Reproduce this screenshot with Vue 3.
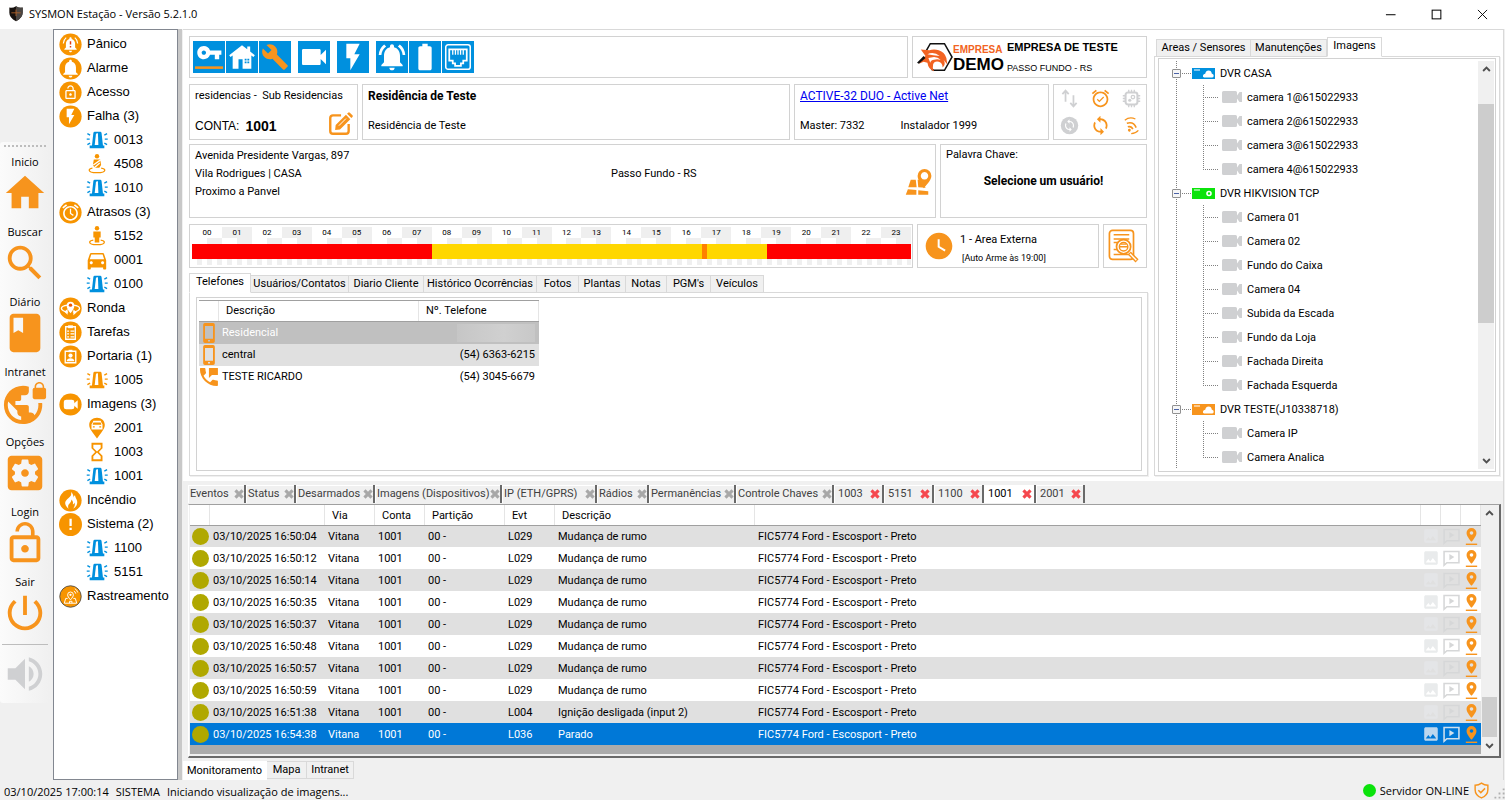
<script setup>
import { h, ref } from 'vue'

const BELL = 'M12 22c1.1 0 2-.9 2-2h-4c0 1.1.89 2 2 2zm6-6v-5c0-3.07-1.64-5.64-4.5-6.32V4c0-.83-.67-1.5-1.5-1.5s-1.5.67-1.5 1.5v.68C7.63 5.36 6 7.92 6 11v5l-2 2v1h16v-1l-2-2z'
const BOLT = 'M7 2v11h3v9l7-12h-4l4-8z'
const CAM = 'M17 10.5V7c0-.55-.45-1-1-1H4c-.55 0-1 .45-1 1v10c0 .55.45 1 1 1h12c.55 0 1-.45 1-1v-3.5l4 4v-11l-4 4z'
const LOCK = 'M12 17c1.1 0 2-.9 2-2s-.9-2-2-2-2 .9-2 2 .9 2 2 2zm6-9h-1V6c0-2.76-2.24-5-5-5S7 3.24 7 6h1.9c0-1.71 1.39-3.1 3.1-3.1 1.71 0 3.1 1.39 3.1 3.1v2H6c-1.1 0-2 .9-2 2v10c0 1.1.9 2 2 2h12c1.1 0 2-.9 2-2V10c0-1.1-.9-2-2-2zm0 12H6V10h12v10z'
const CAR = 'M18.92 6.01C18.72 5.42 18.16 5 17.5 5h-11c-.66 0-1.21.42-1.42 1.01L3 12v8c0 .55.45 1 1 1h1c.55 0 1-.45 1-1v-1h12v1c0 .55.45 1 1 1h1c.55 0 1-.45 1-1v-8l-2.08-5.99zM6.5 16c-.83 0-1.5-.67-1.5-1.5S5.67 13 6.5 13s1.5.67 1.5 1.5S7.33 16 6.5 16zm11 0c-.83 0-1.5-.67-1.5-1.5s.67-1.5 1.5-1.5 1.5.67 1.5 1.5-.67 1.5-1.5 1.5zM5 11l1.5-4.5h11L19 11H5z'
const SYNC = 'M12 4V1L8 5l4 4V6c3.31 0 6 2.69 6 6 0 1.01-.25 1.97-.7 2.8l1.46 1.46C19.54 15.03 20 13.57 20 12c0-4.42-3.58-8-8-8zm0 14c-3.31 0-6-2.69-6-6 0-1.01.25-1.97.7-2.8L5.24 7.74C4.46 8.97 4 10.43 4 12c0 4.42 3.58 8 8 8v3l4-4-4-4v3z'
const ALARM = 'M22 5.72l-4.6-3.86-1.29 1.53 4.6 3.86L22 5.72zM7.88 3.39L6.6 1.86 2 5.71l1.29 1.53 4.59-3.85zM12 4c-4.97 0-9 4.03-9 9s4.02 9 9 9c4.97 0 9-4.03 9-9s-4.03-9-9-9zm0 16c-3.87 0-7-3.13-7-7s3.13-7 7-7 7 3.13 7 7-3.13 7-7 7z'
const p = (d, extra = '') => `<path d="${d}" ${extra}/>`
const s = (d, w = 1.5, c = 'currentColor') => `<path d="${d}" fill="none" stroke="${c}" stroke-width="${w}"/>`
const disc = (inner) => `<circle cx="12" cy="12" r="11.6" fill="#f79400"/>${inner}`
const mini = (d, k = 0.7) => `<g fill="#fff" transform="translate(${12 - 12 * k} ${12 - 12 * k}) scale(${k})">${p(d)}</g>`

const icons = {
  home: p('M10 20v-6h4v6h5v-8h3L12 3 2 12h3v8z'),
  search: p('M15.5 14h-.79l-.28-.27C15.41 12.59 16 11.11 16 9.5 16 5.91 13.09 3 9.5 3S3 5.91 3 9.5 5.91 16 9.5 16c1.61 0 3.09-.59 4.23-1.57l.27.28v.79l5 4.99L20.49 19l-4.99-5zm-6 0C7.01 14 5 11.99 5 9.5S7.01 5 9.5 5 14 7.01 14 9.5 11.99 14 9.5 14z'),
  book: p('M18 2H6c-1.1 0-2 .9-2 2v16c0 1.1.9 2 2 2h12c1.1 0 2-.9 2-2V4c0-1.1-.9-2-2-2zM6 4h5v8l-2.5-1.5L6 12V4z'),
  globe: p('M22 4v-.5C22 2.12 20.88 1 19.5 1S17 2.12 17 3.5V4c-.55 0-1 .45-1 1v4c0 .55.45 1 1 1h5c.55 0 1-.45 1-1V5c0-.55-.45-1-1-1zm-.8 0h-3.4v-.5c0-.94.76-1.7 1.7-1.7s1.7.76 1.7 1.7V4zm-2.28 8c.04.33.08.66.08 1 0 2.08-.8 3.97-2.1 5.39-.26-.81-1-1.39-1.9-1.39h-1v-3c0-.55-.45-1-1-1H7v-2h2c.55 0 1-.45 1-1V8h2c1.1 0 2-.9 2-2V3.46c-.95-.3-1.95-.46-3-.46C5.48 3 1 7.48 1 13s4.48 10 10 10 10-4.48 10-10c0-.34-.02-.67-.05-1h-2.03zM10 20.93c-3.95-.49-7-3.85-7-7.93 0-.62.08-1.21.21-1.79L8 16v1c0 1.1.9 2 2 2v1.93z'),
  settings: p('M12 10c-1.1 0-2 .9-2 2s.9 2 2 2 2-.9 2-2-.9-2-2-2zm7-7H5c-1.11 0-2 .9-2 2v14c0 1.1.89 2 2 2h14c1.11 0 2-.9 2-2V5c0-1.1-.89-2-2-2zm-1.75 9c0 .23-.02.46-.05.68l1.48 1.16c.13.11.17.3.08.45l-1.4 2.42c-.09.15-.27.21-.43.15l-1.74-.7c-.36.28-.76.51-1.18.69l-.26 1.85c-.03.17-.18.3-.35.3h-2.8c-.17 0-.32-.13-.35-.29l-.26-1.85c-.43-.18-.82-.41-1.18-.69l-1.74.7c-.16.06-.34 0-.43-.15l-1.4-2.42c-.09-.15-.05-.34.08-.45l1.48-1.16c-.03-.23-.05-.46-.05-.69 0-.23.02-.46.05-.68l-1.48-1.16c-.13-.11-.17-.3-.08-.45l1.4-2.42c.09-.15.27-.21.43-.15l1.74.7c.36-.28.76-.51 1.18-.69l.26-1.85c.03-.17.18-.3.35-.3h2.8c.17 0 .32.13.35.29l.26 1.85c.43.18.82.41 1.18.69l1.74-.7c.16-.06.34 0 .43.15l1.4 2.42c.09.15.05.34-.08.45l-1.48 1.16c.03.23.05.46.05.69z'),
  lock: p(LOCK),
  power: p('M13 3h-2v10h2V3zm4.83 2.17l-1.42 1.42C17.99 7.86 19 9.81 19 12c0 3.87-3.13 7-7 7s-7-3.13-7-7c0-2.19 1.01-4.14 2.58-5.42L6.17 5.17C4.23 6.82 3 9.26 3 12c0 4.97 4.03 9 9 9s9-4.03 9-9c0-2.74-1.23-5.18-3.17-6.83z'),
  volume: p('M3 9v6h4l5 5V4L7 9H3zm13.5 3c0-1.77-1.02-3.29-2.5-4.03v8.05c1.48-.73 2.5-2.25 2.5-4.02zM14 3.23v2.06c2.89.86 5 3.54 5 6.71s-2.11 5.85-5 6.71v2.06c4.01-.91 7-4.49 7-8.77s-2.99-7.86-7-8.77z'),

  dPanico: disc(mini(BELL, 0.8) + s('M4.5 11a8.5 8.5 0 0 1 3-6.200M19.500 11a8.500 8.500 0 0 0-3-6.200', 1.2, '#fff') + s('M12 8.500v3.500M12 13.500v1.500', 1.5, '#e33a10')),
  dAlarme: disc(mini(BELL, 0.95)),
  dAcesso: disc(mini(LOCK, 0.68)),
  dFalha: disc(mini(BOLT, 0.8)),
  dAtrasos: disc(mini(ALARM, 0.86) + s('M12 8v5l3 2', 1.3, '#fff')),
  dRonda: disc(`<g fill="none" stroke="#fff" stroke-width="1.400"><path d="M9 8.500C5 9 2.500 10.500 2.500 12s3 3.500 7 3.800M15 8.500c4 .5 6.500 2 6.500 3.500s-3 3.500-7 3.800"/></g><path d="M12 17c-2.500-3.500-4-5.500-4-8a4 4 0 0 1 8 0c0 2.500-1.500 4.500-4 8zM9 12.500v6l-3.500-3zM15 13v6l3.500-3z" fill="#fff"/><circle cx="12" cy="8.500" r="1.800" fill="#f15a00"/>`),
  dTarefas: disc('<path d="M7 6h10v13H7z" fill="none" stroke="#fff" stroke-width="1.400"/><path d="M9.500 4.500h5v3h-5z" fill="#fff"/>' + s('M8.500 10.500h2M12 10.500h4M8.500 13.500h2M12 13.500h4M8.500 16.500h2M12 16.500h4', 1.2, '#fff')),
  dPortaria: disc('<path d="M6.500 6.500h11v12h-11z" fill="none" stroke="#fff" stroke-width="1.400"/><path d="M10 5h4v2.500h-4z" fill="#fff"/><circle cx="12" cy="11" r="2.200" fill="#fff"/><path d="M8 17c0-2.500 2-3.300 4-3.300s4 .8 4 3.300z" fill="#fff"/>'),
  dImagens: disc('<rect x="5" y="7" width="11" height="10" rx="2.500" fill="#fff"/><path d="M15 11.500l4.500-4v9l-4.500-4z" fill="#fff"/>'),
  dIncendio: disc('<path d="M12.500 3c1 3-.5 4.500-2.500 6.500S6 13 6.500 15.500c.4 2.300 2 4 3.500 5-1-2.500-.5-4 1-5.500 1.300-1.300 2-2.500 1.800-4 2 1.500 2.200 3.500 1.500 5 1-.3 1.600-1 1.800-2 1 2 .3 4.500-1.500 6.500 3-1.300 5-4.500 4.300-8-.5-2.500-2-3.500-2.200-6-1 .7-1.500 1.700-1.500 3C15.500 7.500 14.500 4.500 12.500 3z" fill="#fff"/>'),
  dSistema: '<circle cx="12" cy="12" r="12" fill="#f79400"/><path d="M10.900 6h2.400v7.500h-2.400zM10.900 15.300h2.400v2.400h-2.400z" fill="#fff"/>',
  dRastreamento: '<circle cx="12" cy="12" r="11.200" fill="#f79400" stroke="#4a4a4a" stroke-width=".9"/>' + s('M12 15.500c-2-2.500-3-3.700-3-5.200a3 3 0 0 1 6 0c0 1.500-1 2.700-3 5.200zM9 14H7l-1.500 5h13L17 14h-2M11 19v-2h2.500v2', 1, '#fff') + '<circle cx="12" cy="10.300" r="1.200" fill="#fff"/>' + s('M15.500 6.500a3 3 0 0 1 2 2.500M16.500 3.800a6 6 0 0 1 3 4', 1, '#fff'),
  siren: '<path d="M6.500 18L8 4.500Q8.200 3 9.500 3h6q1.300 0 1.500 1.500L18.500 18h1.500v3H4v-3z"/><path d="M9.500 17.500L10.800 6q.2-1.500 1.500-1.500h.7l.5 13z" fill="#fff"/>' + s('M1.500 5l3 1.600M.8 11h3.200M1.500 17l3-1.600M23 5l-3 1.600M23.700 11h-3.200M23 17l-3-1.600', 1.5),
  person: '<circle cx="12" cy="3.500" r="2.400"/><path d="M8 7h8v6.500h-1.500V19h-5v-5.500H8z"/>' + s('M8 16.500c-2.500.4-4 1.200-4 2.300 0 1.500 3.500 2.700 8 2.700s8-1.200 8-2.700c0-1.100-1.500-1.900-4-2.300', 1.4),
  personOff: '<circle cx="12" cy="3.500" r="2.400"/><path d="M8.500 7h7l1 6-2 3h-5l-2-3z"/>' + s('M8 13l8-5.500M9 16l6-5', 1.4, '#fff') + s('M7 16.500c-2.200.4-3.500 1.200-3.500 2.300 0 1.500 3.500 2.700 8.500 2.700s8.500-1.200 8.500-2.700c0-1.100-1.500-1.900-4-2.300', 1.4),
  car: p(CAR, 'transform="translate(-1.500 -1.200) scale(1.120)"'),
  carPin: '<path d="M12 23.500l-5-7C4.500 13.500 3.500 11 3.500 8.500 3.500 4 7 .7 12 .7s8.500 3.300 8.500 7.800c0 2.500-1 5-3.500 8z"/><path d="M7 6.500L8 4h8l1 2.500 1 1.500v5.500H6V8z" fill="#fff"/><path d="M8 6h8l.8 2.500H7.200zM7.500 10h2v1.500h-2zM14.500 10h2v1.500h-2z"/>',
  hourglass: p('M6 2v6h.01L6 8.01 10 12l-4 4 .01.01H6V22h12v-5.99h-.01L18 16l-4-4 4-3.990-.01-.01H18V2H6zm10 14.500V20H8v-3.500l4-4 4 4zm-4-5l-4-4V4h8v3.500l-4 4z'),

  key: p('M12.650 10C11.830 7.670 9.610 6 7 6c-3.310 0-6 2.690-6 6s2.690 6 6 6c2.610 0 4.830-1.670 5.650-4H17v4h4v-4h2v-4H12.650zM7 14c-1.100 0-2-.9-2-2s.9-2 2-2 2 .9 2 2-.9 2-2 2z', 'transform="translate(1 -3) scale(.94)"') + '<path d="M0 20h24v2.200H0z" fill="#f7941d"/>',
  house: p('M12 2L1 10.500l1.200 1.500L4 10.800V22h5v-8h3.500v8H20V10.800l1.800 1.200 1.200-1.500-4-3.200V3h-2.500v2.300zM14.300 13.500h1.600v1.500h-1.600zM16.600 13.500h1.600v1.500h-1.600zM14.300 15.800h1.600v1.500h-1.600zM16.600 15.800h1.600v1.500h-1.600z', 'fill-rule="evenodd"'),
  wrench: p('M22.700 19l-9.100-9.100c.9-2.300.4-5-1.500-6.900-2-2-5-2.400-7.400-1.300L9 6 6 9 1.600 4.700C.4 7.100.9 10.100 2.900 12.100c1.900 1.900 4.600 2.400 6.900 1.500l9.100 9.100c.4.4 1 .4 1.400 0l2.300-2.300c.5-.4.5-1.100.1-1.400z'),
  cam: p(CAM),
  bolt: p(BOLT),
  ring: p(BELL) + p('M7.580 4.080L6.150 2.650C3.750 4.480 2.170 7.300 2.030 10.500h2c.15-2.650 1.510-4.970 3.550-6.420zm12.390 6.420h2c-.15-3.200-1.730-6.020-4.120-7.850l-1.420 1.430c2.020 1.450 3.390 3.770 3.540 6.420z'),
  battery: p('M15.670 4H14V2h-4v2H8.330C7.600 4 7 4.600 7 5.330v15.330C7 21.400 7.600 22 8.330 22h7.330c.74 0 1.340-.6 1.340-1.330V5.330C17 4.600 16.400 4 15.670 4z'),
  ethernet: '<rect x="1.500" y="1.500" width="21" height="21" rx="2" fill="none" stroke="currentColor" stroke-width="1.300"/>' + s('M4.500 5.500h15v9.500h-3v2.500h-2v2h-5v-2h-2V15h-3z', 1.500) + s('M7.500 6v4M9.800 6v4M12 6v4M14.200 6v4M16.500 6v4', 1.100),
  edit: s('M13 4H5.500Q3 4 3 6.500v12Q3 21 5.500 21h12q2.500 0 2.500-2.500V12', 2.2) + p('M8 13l9.500-9.500 4 4L12 17l-4.500.5zM18.500 2.500l1-1q.8-.8 1.600 0l2.400 2.400q.8.800 0 1.600l-1 1z') + s('M11 13.500l6.500-6.500', 0.9, '#fff'),
  arrows: s('M7 16V2M3 6.500L7 2l4 4.500M17 8v14M13 17.500l4 4.500 4-4.500', 2.2),
  alarmOn: p(ALARM, 'transform="translate(-1.200 -1.200) scale(1.100)"') + p('M10.540 14.530l-2.120-2.120-1.060 1.060 3.180 3.180 6-6-1.060-1.060z'),
  chip: '<rect x="4.500" y="4.500" width="15" height="15" rx="3" fill="none" stroke="currentColor" stroke-width="2.600"/>' + s('M8.500 1v3M12 1v3M15.500 1v3M8.500 20v3M12 20v3M15.500 20v3M1 8.500h3M1 12h3M1 15.500h3M20 8.500h3M20 12h3M20 15.500h3', 1.700) + '<circle cx="13.800" cy="10.200" r="2.200" fill="none" stroke="currentColor" stroke-width="1.600"/><circle cx="9.800" cy="14.200" r="2"/>',
  syncDisc: '<circle cx="12" cy="12" r="11"/>' + mini(SYNC, 0.72),
  sync: p(SYNC, 'transform="translate(-1.500 -1.500) scale(1.120)"'),
  wifi: '<g transform="rotate(25 12 12)">' + s('M5.500 12q6.500-6 13 0M8.500 15.500q3.500-3 7 0', 2) + '<circle cx="12" cy="18.500" r="1.800"/>' + s('M1.500 9.500Q5 2.500 13 2.500M22.500 14Q21 19 16 21.500', 1.6) + '</g>',
  map: '<path d="M7 11h4l.7 6H5zM12.500 11h2l3 4.500 1.500 1.800-6-.3zM4.700 18.500l6.800.6V23H3zM13 19.300l8 .8V23h-8z"/><path fill-rule="evenodd" d="M17.500 17.800c-3-4.500-5-6.800-5-10a5.500 5.500 0 0 1 11 0c0 3.200-2.500 5.500-6 10zM18 4.800a3 3 0 1 0 .01 0z"/>',
  clock: p('M12 2C6.500 2 2 6.500 2 12s4.500 10 10 10 10-4.500 10-10S17.500 2 12 2zm4.200 14.200L11 13V7h1.500v5.200l4.500 2.700-.8 1.300z'),
  report: '<rect x="1" y="1" width="17" height="20.500" rx="2.200" fill="none" stroke="currentColor" stroke-width="1.200"/>' + s('M4 4h11M4 7h11M4 9.500h4M4 14.500h3M4 18h13', 1) + '<circle cx="11" cy="12.500" r="5" fill="#fff" stroke="currentColor" stroke-width="1.200"/><circle cx="11" cy="12.500" r="3" fill="none" stroke="currentColor"/>' + s('M8 12.500h6M9 10.700h4', 1) + s('M15 17l5.500 5.500', 3) + s('M15.500 17.500l4.500 4.500', 1, '#fff'),
  phone: '<path fill-rule="evenodd" d="M7 0h10q2 0 2 2v20q0 2-2 2H7q-2 0-2-2V2q0-2 2-2zM7.200 3.500v15.500h9.600V3.500zM10.800 20.500v1.800h2.400v-1.800z"/>',
  phoneMsg: p('M20 15.500c-1.250 0-2.450-.2-3.570-.57-.35-.11-.74-.03-1.020.24l-2.200 2.200c-2.830-1.440-5.150-3.750-6.590-6.580l2.200-2.210c.28-.27.36-.66.25-1.010C8.700 6.450 8.500 5.250 8.500 4c0-.55-.45-1-1-1H4c-.55 0-1 .45-1 1 0 9.390 7.610 17 17 17 .55 0 1-.45 1-1v-3.500c0-.55-.45-1-1-1zM12 3v10l3-3h6V3h-9z', 'transform="translate(-2.500 -2.500) scale(1.200)"'),
  close: s('M3.500 3.500l17 17M20.500 3.500l-17 17', 7.500),
  image: p('M21 19V5c0-1.100-.9-2-2-2H5c-1.100 0-2 .9-2 2v14c0 1.100.9 2 2 2h14c1.100 0 2-.9 2-2zM8.500 13.500l2.500 3.010L14.500 12l4.500 6H5l3.500-4.500z', 'transform="translate(-3.500 -3.500) scale(1.290)"'),
  play: s('M1.500 2h21v16H5.500l-4 3.500z', 2.2) + p('M9 5.500l7 4.500-7 4.500z'),
  pin: '<path fill-rule="evenodd" d="M12 0a7 7 0 0 1 7 7c0 5-7 12.500-7 12.500S5 12 5 7a7 7 0 0 1 7-7zM12 4.500a2.500 2.500 0 1 0 .01 0z"/><path d="M4 22h16v2H4z"/>',
  shield: s('M12 1.500q4 3 9 3V11q0 8-9 11.500Q3 19 3 11V4.500q5 0 9-3z', 2) + s('M7.500 11.500l3.500 3.500 6-6', 2),
  shieldLogo: '<path d="M2 3q5 1 10-2 5 3 10 2v8q0 8-10 12.500Q2 19 2 11z" fill="#17120f"/><path d="M12 1q5 3 10 2v8q0 8-10 12.500z" fill="#4a4643"/><path d="M5 11h14M12 6v10" stroke="#b0622a" stroke-width="1.300"/>',
  min: s('M2 12.500h21', 2.2),
  max: '<rect x="2.500" y="2.500" width="19" height="19" fill="none" stroke="currentColor" stroke-width="2.200"/>',
  exit: s('M2 2l20 20M22 2L2 22', 2),
  up: s('M3 16l9-9 9 9', 5),
  down: s('M3 8l9 9 9-9', 5),
  grip: '<path d="M19 1h4v4h-4zM19 10h4v4h-4zM19 19h4v4h-4zM10 10h4v4h-4zM10 19h4v4h-4zM1 19h4v4H1z"/>'
}
const Icon = (props) => h('svg', { class: 'icon', viewBox: '0 0 24 24', fill: 'currentColor', 'aria-hidden': 'true', innerHTML: icons[props.name] })
Icon.props = ['name']

const tools = [['Inicio', 'home'], ['Buscar', 'search'], ['Diário', 'book'], ['Intranet', 'globe'], ['Opções', 'settings'], ['Login', 'lock'], ['Sair', 'power']]
const B = 'blue', O = 'orange'
const queue = [
  ['Pânico', 'dPanico'], ['Alarme', 'dAlarme'], ['Acesso', 'dAcesso'],
  ['Falha (3)', 'dFalha', [['0013', 'siren', B], ['4508', 'personOff', O], ['1010', 'siren', B]]],
  ['Atrasos (3)', 'dAtrasos', [['5152', 'person', O], ['0001', 'car', O], ['0100', 'siren', B]]],
  ['Ronda', 'dRonda'], ['Tarefas', 'dTarefas'],
  ['Portaria (1)', 'dPortaria', [['1005', 'siren', O]]],
  ['Imagens (3)', 'dImagens', [['2001', 'carPin', O], ['1003', 'hourglass', O], ['1001', 'siren', B]]],
  ['Incêndio', 'dIncendio'],
  ['Sistema (2)', 'dSistema', [['1100', 'siren', B], ['5151', 'siren', B]]],
  ['Rastreamento', 'dRastreamento']
]
const actionGroups = [['key', 'house', 'wrench'], ['cam'], ['bolt'], ['ring', 'battery', 'ethernet']]
const states = [['arrows', 'off'], ['alarmOn', 'on'], ['chip', 'off'], ['syncDisc', 'off'], ['sync', 'on'], ['wifi', 'on']]
const hours = Array.from({ length: 24 }, (_, i) => String(i).padStart(2, '0'))
const DAY = 24 * 60
const segments = [['red', 481], ['gold', 540], ['mark', 10], ['gold', 121], ['red', 288]].map(([tone, min]) => ({ tone, width: (min / DAY) * 100 + '%' }))
const clientTabs = ['Telefones', 'Usuários/Contatos', 'Diario Cliente', 'Histórico Ocorrências', 'Fotos', 'Plantas', 'Notas', "PGM's", 'Veículos']
const clientTab = ref('Telefones')
const sideTabs = ['Areas / Sensores', 'Manutenções', 'Imagens']
const sideTab = ref('Imagens')
const dvrs = [
  { name: 'DVR CASA', tone: 'blue', cloud: true, cams: ['camera 1@615022933', 'camera 2@615022933', 'camera 3@615022933', 'camera 4@615022933'] },
  { name: 'DVR HIKVISION TCP', tone: 'green', cloud: false, cams: ['Camera 01', 'Camera 02', 'Fundo do Caixa', 'Camera 04', 'Subida da Escada', 'Fundo da Loja', 'Fachada Direita', 'Fachada Esquerda'] },
  { name: 'DVR TESTE(J10338718)', tone: 'amber', cloud: true, cams: ['Camera IP', 'Camera Analica'] }
]
const eventTabs = [...['Eventos', 'Status', 'Desarmados', 'Imagens (Dispositivos)', 'IP (ETH/GPRS)', 'Rádios', 'Permanências', 'Controle Chaves'].map((t) => [t, false]), ...['1003', '5151', '1100', '1001', '2001'].map((t) => [t, true])]
const eventTab = ref('1001')
const events = [
  ...['16:50:04', '16:50:12', '16:50:14', '16:50:35', '16:50:37', '16:50:48', '16:50:57', '16:50:59'].map((t) => [t, 'L029', 'Mudança de rumo']),
  ['16:51:38', 'L004', 'Ignição desligada (input 2)'],
  ['16:54:38', 'L036', 'Parado']
]
const bottomTabs = ['Monitoramento', 'Mapa', 'Intranet']
const bottomTab = ref('Monitoramento')
</script>

<template>
  <div class="app">
    <header class="titlebar">
      <Icon name="shieldLogo" class="logo" />
      <h1>SYSMON Estação - Versão 5.2.1.0</h1>
      <div class="winctl">
        <button aria-label="Minimizar"><Icon name="min" /></button>
        <button aria-label="Maximizar"><Icon name="max" /></button>
        <button aria-label="Fechar"><Icon name="exit" /></button>
      </div>
    </header>

    <div class="body">
      <nav class="toolbar">
        <div class="toolstrip">
          <div class="handle"></div>
          <button v-for="t in tools" :key="t[0]" class="tool"><span>{{ t[0] }}</span><Icon :name="t[1]" /></button>
          <button class="sound" aria-label="Som"><Icon name="volume" /></button>
        </div>
      </nav>

      <aside class="queue">
        <ul>
          <li v-for="g in queue" :key="g[0]">
            <div class="node"><Icon :name="g[1]" /><span>{{ g[0] }}</span></div>
            <ul v-if="g[2]">
              <li v-for="c in g[2]" :key="c[0]" class="node child"><Icon :name="c[1]" :class="c[2]" /><span>{{ c[0] }}</span></li>
            </ul>
          </li>
        </ul>
      </aside>

      <main class="main">
        <div class="upper">
          <div class="client">
            <div class="row r1">
              <div class="box actions">
                <div v-for="(g, i) in actionGroups" :key="i" class="group">
                  <button v-for="a in g" :key="a" :class="a" :aria-label="a"><Icon :name="a" /></button>
                </div>
              </div>
              <div class="box company">
                <svg class="eagle" viewBox="0 0 38 32" aria-hidden="true">
                  <path d="M10 9L14 2h15l8 14-8 14H18l-3-1" fill="none" stroke="#111" stroke-width="1.600" />
                  <path d="M4 8l9 1q5-2 10 0 6 2 8 8l1 7-4-5q3 5-1 8 0-5-4-6-5-1-6 3-1 3 1 7-6-2-7-9l-4-1-5 2 3-4q2-3 4-4z" fill="#f26322" />
                  <path d="M11 13q7-3 13 2-7-1-13-2zM12 17l6-1q4 0 7 3-4-1-7 0-3 0-4 3z" fill="#fff" />
                  <path d="M0 22l7-7 2 2-7 6z" fill="#111" />
                </svg>
                <div class="brand"><b class="emp">EMPRESA</b><b class="demo">DEMO</b></div>
                <div class="cname"><b>EMPRESA DE TESTE</b><span>PASSO FUNDO - RS</span></div>
              </div>
            </div>
            <div class="row r2">
              <div class="box pair acct">
                <div>residencias -&nbsp; Sub Residencias</div>
                <div class="conta"><span>CONTA:</span><b>1001</b><button aria-label="Editar"><Icon name="edit" /></button></div>
              </div>
              <div class="box pair"><b class="strong">Residência de Teste</b><div>Residência de Teste</div></div>
              <div class="box pair"><div><a href="#">ACTIVE-32 DUO - Active Net</a></div><div class="master"><span>Master: 7332</span><span>Instalador 1999</span></div></div>
              <div class="box states"><Icon v-for="st in states" :key="st[0]" :name="st[0]" :class="st[1]" /></div>
            </div>
            <div class="row r3">
              <div class="box address">
                <div><p>Avenida Presidente Vargas, 897</p><p>Vila Rodrigues | CASA</p><p>Proximo a Panvel</p></div>
                <p>Passo Fundo - RS</p>
                <button aria-label="Mapa"><Icon name="map" /></button>
              </div>
              <div class="box keyword"><p>Palavra Chave:</p><b>Selecione um usuário!</b></div>
            </div>
            <div class="row r4">
              <div class="box timeline">
                <div class="hours"><span v-for="x in hours" :key="x">{{ x }}</span></div>
                <div class="halves"></div>
                <div class="bar"><i v-for="(x, i) in segments" :key="i" :class="x.tone" :style="{ width: x.width }"></i></div>
                <div class="ticks"></div>
              </div>
              <div class="box area"><Icon name="clock" /><div><p>1 - Area Externa</p><small>[Auto Arme às 19:00]</small></div></div>
              <button class="box report" aria-label="Relatório"><Icon name="report" /></button>
            </div>

            <div class="tabs client-tabs" role="tablist">
              <button v-for="t in clientTabs" :key="t" role="tab" :class="{ sel: t === clientTab }" @click="clientTab = t">{{ t }}</button>
            </div>
            <div class="page">
              <div class="sheet">
                <table class="phones">
                  <colgroup><col class="c-ico" /><col /><col class="c-num" /></colgroup>
                  <thead><tr><th></th><th>Descrição</th><th>Nº. Telefone</th></tr></thead>
                  <tbody>
                    <tr class="cur"><td><Icon name="phone" /></td><td>Residencial</td><td><div class="hidden-num"></div></td></tr>
                    <tr class="alt"><td><Icon name="phone" /></td><td>central</td><td>(54) 6363-6215</td></tr>
                    <tr><td><Icon name="phoneMsg" /></td><td>TESTE RICARDO</td><td>(54) 3045-6679</td></tr>
                  </tbody>
                </table>
              </div>
            </div>
          </div>

          <aside class="side">
            <div class="tabs side-tabs" role="tablist">
              <button v-for="t in sideTabs" :key="t" role="tab" :class="{ sel: t === sideTab }" @click="sideTab = t">{{ t }}</button>
            </div>
            <div class="page">
              <div class="sheet dvr">
                <ul class="dvrtree">
                  <li v-for="d in dvrs" :key="d.name">
                    <div class="dvrnode">
                      <button class="toggle" aria-label="Recolher"></button><i class="dots"></i>
                      <svg :class="['unit', d.tone]" viewBox="0 0 23 11" aria-hidden="true">
                        <path d="M0 0h23v11H0z" fill="currentColor" /><path d="M2 2h6" stroke="#fff" />
                        <path v-if="d.cloud" d="M12 9.500q-1.500-.3-1-2 .4-1.500 2.200-1.700Q14 2.500 16.500 2.500q3 .2 3.200 3 2.300.5 2 2.500-.3 1.500-1.700 1.500z" fill="#fff" />
                        <circle v-else cx="17" cy="5.500" r="2" fill="none" stroke="#fff" stroke-width="1.600" />
                      </svg>
                      <span>{{ d.name }}</span>
                    </div>
                    <ul>
                      <li v-for="c in d.cams" :key="c" class="cam">
                        <svg class="camico" viewBox="0 0 20 12" aria-hidden="true"><path d="M1.500 0h12q1.500 0 1.500 1.500v9q0 1.500-1.500 1.500h-12Q0 12 0 10.500v-9Q0 0 1.500 0zM15 4.500L17.500 1H20v10h-2.500L15 7.500z" fill="#cfd0d2" /></svg>
                        <span>{{ c }}</span>
                      </li>
                    </ul>
                  </li>
                </ul>
                <div class="scroll"><Icon name="up" /><div class="track"><div class="thumb dvr-thumb"></div></div><Icon name="down" /></div>
              </div>
            </div>
          </aside>
        </div>

        <section class="events">
          <div class="etabs" role="tablist">
            <button v-for="t in eventTabs" :key="t[0]" role="tab" :class="{ sel: t[0] === eventTab, live: t[1] }" @click="eventTab = t[0]"><span>{{ t[0] }}</span><Icon name="close" /></button>
          </div>
          <div class="frame">
            <div class="gridwrap">
              <table class="grid">
                <colgroup><col class="w20" /><col class="w115" /><col class="w50" /><col class="w50" /><col class="w80" /><col class="w50" /><col class="w200" /><col /><col class="w20" /><col class="w20" /><col class="w20" /></colgroup>
                <thead><tr><th></th><th></th><th>Via</th><th>Conta</th><th>Partição</th><th>Evt</th><th>Descrição</th><th></th><th></th><th></th><th></th></tr></thead>
                <tbody>
                  <tr v-for="(e, i) in events" :key="e[0]" :class="{ alt: i % 2 === 0, cur: i === events.length - 1 }">
                    <td class="ic"><i class="dot"></i></td><td>03/10/2025 {{ e[0] }}</td><td>Vitana</td><td>1001</td><td>00 -</td><td>{{ e[1] }}</td><td>{{ e[2] }}</td><td>FIC5774 Ford - Escosport - Preto</td>
                    <td class="ic"><Icon name="image" class="im" /></td><td class="ic"><Icon name="play" class="pl" /></td><td class="ic"><Icon name="pin" class="pn" /></td>
                  </tr>
                </tbody>
              </table>
              <div class="rest"></div>
            </div>
            <div class="scroll"><Icon name="up" /><div class="track"><div class="thumb ev-thumb"></div></div><Icon name="down" /></div>
          </div>
        </section>

        <div class="btabs" role="tablist">
          <button v-for="t in bottomTabs" :key="t" role="tab" :class="{ sel: t === bottomTab }" @click="bottomTab = t">{{ t }}</button>
        </div>
      </main>
    </div>

    <footer class="status">
      <span>03/10/2025 17:00:14</span><span>SISTEMA</span><span>Iniciando visualização de imagens...</span>
      <div class="server"><i></i><span>Servidor ON-LINE</span><Icon name="shield" class="shield" /><Icon name="grip" class="grip" /></div>
    </footer>
  </div>
</template>

<style>
body { margin: 0; overflow: hidden; }
</style>

<style scoped>
* { box-sizing: border-box; }
.app { --ui: "Open Sans", "Noto Sans", sans-serif; --data: Roboto, "Liberation Sans", sans-serif; display: flex; flex-direction: column; height: 100vh; background: #f0f0f0; color: #000; font: 11px/16px var(--data); }
button { font: inherit; color: inherit; background: none; border: 0; padding: 0; margin: 0; }
ul { list-style: none; margin: 0; padding: 0; }
p, h1 { margin: 0; font-weight: normal; font-size: inherit; }
.icon { display: block; flex: none; }
table { border-collapse: collapse; table-layout: fixed; }
th, td { padding: 0; font-weight: normal; text-align: left; white-space: nowrap; overflow: hidden; }

.titlebar { flex: none; display: flex; align-items: center; height: 29px; padding-left: 8px; background: #fff; font: 11px/16px var(--ui); }
.titlebar h1 { flex: 1; margin: 0 0 2px 5px; }
.logo { width: 16px; height: 17px; margin-bottom: 2px; }
.winctl { display: flex; }
.winctl button { display: flex; justify-content: center; align-items: center; width: 46px; height: 28px; }
.winctl .icon { width: 11px; height: 11px; }

.body { flex: 1; min-height: 0; display: flex; }
.toolbar { flex: none; width: 53px; padding-top: 113px; color: #f7941d; }
.toolstrip { width: 50px; height: 561px; border-radius: 3px; background: linear-gradient(to right, #fbfbfb, #f0f0f0); padding-top: 3px; }
.handle { height: 2px; margin: 0 3px 4px 4px; background: repeating-linear-gradient(to right, #bdbdbd 0 2px, transparent 2px 4px); }
.tool { display: block; width: 50px; height: 70px; }
.tool span { display: block; color: #000; font: 11px/16px var(--ui); text-align: center; margin-top: -2px; white-space: nowrap; }
.tool .icon { width: 46px; height: 46px; margin: 0 2px; }
.sound { display: block; width: 46px; margin: 3px 2px 0; padding-top: 6px; border-top: 1px solid #bdbdbd; color: #cfd0d2; }
.sound .icon { width: 46px; height: 46px; }

.queue { flex: none; width: 125px; border: 1px solid #828790; background: #fff; padding-top: 2px; margin-right: 5px; box-shadow: 4px 0 0 #c8c8c8; font: 13px/24px "Liberation Sans", Arial, sans-serif; }
.node { display: flex; align-items: center; height: 24px; padding-left: 5px; gap: 5px; white-space: nowrap; }
.node .icon { width: 23px; height: 23px; }
.node.child { padding-left: 32px; gap: 6px; }
.node.child .icon { width: 22px; height: 22px; }
.blue { color: #0090de; }
.orange { color: #f79400; }

.main { flex: 1; min-width: 0; display: flex; flex-direction: column; border-top: 1px solid #d9d9d9; border-right: 1px solid #d9d9d9; margin-right: 1px; background: #fff; }
.upper { flex: none; display: flex; gap: 6px; padding: 6px 3px 5px 6px; }
.client { flex: 1; min-width: 0; display: flex; flex-direction: column; }
.side { flex: none; width: 346px; display: flex; flex-direction: column; }
.box { border: 1px solid #d2d2d2; background: #fff; }
.row { display: grid; column-gap: 4px; margin: 0 1px 6px 0; }
.r1 { grid-template-columns: 1fr 235px; height: 42px; }
.r2 { grid-template-columns: 169px 1fr 255px 94px; height: 54px; }
.r3 { grid-template-columns: 1fr 207px; height: 74px; }
.r4 { grid-template-columns: 1fr 182px 44px; height: 44px; margin-bottom: 5px; }
.actions { display: flex; align-items: center; gap: 7px; padding: 0 3px; }
.group { display: flex; gap: 1px; }
.actions button { display: flex; align-items: center; justify-content: center; width: 32px; height: 32px; background: #0090de; color: #fff; }
.actions .icon { width: 28px; height: 28px; }
.actions .cam .icon, .actions .bolt .icon, .actions .battery .icon, .actions .ring .icon { width: 32px; height: 32px; }
.actions .wrench { color: #f7941d; }
.company { display: flex; align-items: center; padding: 0 4px; }
.eagle { width: 36px; height: 32px; }
.brand { display: flex; flex-direction: column; width: 54px; padding-top: 2px; font-family: "Liberation Sans", Arial, sans-serif; }
.emp { color: #f26322; font-size: 10px; line-height: 12px; }
.demo { font-size: 17px; line-height: 17px; }
.cname { display: flex; flex-direction: column; font-family: "Liberation Sans", Arial, sans-serif; white-space: nowrap; }
.cname b { line-height: 16px; }
.cname span { font-size: 9px; line-height: 16px; margin-top: 5px; }
.pair { display: flex; flex-direction: column; justify-content: space-between; padding: 3px 5px 5px; white-space: nowrap; }
.strong { font-size: 12px; }
.conta { display: flex; align-items: center; gap: 6px; height: 16px; font: 12px/16px "Liberation Sans", Arial, sans-serif; }
.conta b { font-size: 14px; flex: 1; }
.conta .icon { width: 28px; height: 26px; margin: -4px -2px 0 0; color: #f7941d; }
.pair a { color: #0000f0; font-size: 12px; }
.master { display: flex; gap: 36px; }
.states { display: grid; grid-template-columns: repeat(3, 31px); grid-template-rows: repeat(2, 27px); place-items: center; align-content: center; }
.states .icon { width: 19px; height: 19px; }
.off { color: #cfd0d2; }
.on { color: #f7941d; }
.address { display: grid; grid-template-columns: 416px 1fr 30px; padding: 2px 3px 0 5px; }
.address p { line-height: 18px; }
.address > p { margin-top: 18px; }
.address button { align-self: center; color: #f7941d; }
.address .icon { width: 30px; height: 30px; margin-top: -2px; }
.keyword { padding: 1px 5px; line-height: 18px; }
.keyword b { display: block; margin-top: 8px; text-align: center; font-size: 12px; }
.timeline { padding: 2px 1px 2px 2px; }
.hours { display: grid; grid-template-columns: repeat(24, 1fr); font-size: 8px; line-height: 11px; text-align: center; }
.hours span:nth-child(even) { background: #efefef; }
.halves { height: 6px; background: repeating-linear-gradient(to right, transparent 0 2.0833%, #efefef 2.0833% 4.1667%); }
.bar { display: flex; height: 15px; }
.red { background: #f00; }
.gold { background: #ffd700; }
.mark { background: #ff8000; }
.ticks { height: 6px; background: repeating-linear-gradient(to right, transparent 0 5px, #efefef 5px 10px); }
.area { display: flex; align-items: center; gap: 5px; padding-left: 5px; }
.area .icon { width: 32px; height: 32px; color: #f7941d; }
.area p { line-height: 16px; padding-top: 6px; }
.area small { display: block; font-size: 9px; line-height: 16px; padding: 2px 0 0 2px; }
.report { display: flex; align-items: center; justify-content: center; }
.row .report { border: 1px solid #d2d2d2; color: #f7941d; }
.report .icon { width: 34px; height: 36px; }

.tabs { display: grid; align-items: end; margin-bottom: -1px; z-index: 1; }
.client-tabs { grid-template-columns: 62px 98px 75px 113px 42px 47px 41px 44px 53px; height: 20px; }
.side-tabs { grid-template-columns: 95px 76px 55px; height: 21px; margin-left: 2px; }
.tabs button { height: 18px; border: 1px solid #d9d9d9; border-left-width: 0; background: #f0f0f0; white-space: nowrap; line-height: 16px; }
.tabs button:first-child { border-left-width: 1px; }
.tabs button.sel { height: 20px; background: #fff; border-bottom-color: #fff; border-left-width: 1px; padding-bottom: 2px; }
.page { flex: 1; display: flex; border: 1px solid #d9d9d9; box-shadow: 1px 1px 0 #f0f0f0; padding: 4px 5px 4px 6px; }
.client .page { height: 186px; }
.sheet { flex: 1; min-width: 0; border: 1px solid #d2d2d2; padding: 2px; }
.phones { width: 340px; }
.phones tr > :first-child { text-align: center; }
.c-ico { width: 20px; }
.c-num { width: 120px; }
.phones th, .grid th { height: 20px; line-height: 16px; background: #fff; border: solid #a0a0a0; border-width: 1px 0; padding-left: 7px; box-shadow: inset -1px 0 0 #e5e5e5; }
.phones th { height: 21px; }
.phones td { height: 22px; padding-left: 3px; }
.phones td:first-child { padding-left: 0; color: #f7941d; }
.phones td:last-child { text-align: right; padding-right: 4px; }
.phones .icon { width: 20px; height: 22px; }
.phones .alt { background: #e0e0e0; }
.phones .cur { background: #c0c0c0; color: #fff; }
.hidden-num { height: 18px; margin-left: 35px; background: linear-gradient(to right, #c6c6c6, #d0d0d0 60%, #c8c8c8); }

.side .page { padding: 1px 3px 3px 3px; }
.dvr { display: flex; padding: 2px 1px 2px 0; }
.dvrtree { flex: 1; padding-left: 13px; background: repeating-linear-gradient(to bottom, #808080 0 1px, #fff 1px 2px) 17px 0 / 1px 100% no-repeat; }
.dvrnode { display: flex; align-items: center; height: 24px; white-space: nowrap; }
.toggle { width: 9px; height: 9px; border: 1px solid #919191; border-radius: 1px; background: linear-gradient(#4b63a7, #4b63a7) center / 5px 1px no-repeat #f6f6f6; }
.dots { width: 9px; height: 1px; margin: 0 1px; background: repeating-linear-gradient(to right, #808080 0 1px, #fff 1px 2px); }
.unit { width: 23px; height: 11px; margin-right: 5px; }
.green { color: #0be30b; }
.amber { color: #f7941d; }
.dvrtree .cam { display: flex; align-items: center; gap: 5px; height: 24px; padding-left: 50px; background: repeating-linear-gradient(to bottom, #808080 0 1px, #fff 1px 2px) 31px 0 / 1px 100% no-repeat, repeating-linear-gradient(to right, #808080 0 1px, #fff 1px 2px) 31px 12px / 15px 1px no-repeat; }
.dvrtree .cam:last-child { background-size: 1px 12px, 15px 1px; }
.dvrtree span { padding-top: 1px; }
.camico { width: 20px; height: 12px; }
.scroll { flex: none; display: flex; flex-direction: column; align-items: center; width: 16px; background: #f0f0f0; color: #505050; padding: 4px 0; }
.scroll .icon { width: 9px; height: 9px; }
.track { flex: 1; width: 100%; margin: 4px 0; display: flex; flex-direction: column; }
.thumb { background: #cdcdcd; }
.dvr-thumb { margin-top: 26px; height: 219px; }
.ev-thumb { margin-top: auto; height: 40px; }

.events { flex: 1; min-height: 0; display: flex; flex-direction: column; background: #f0f0f0; padding: 3px 2px 0 5px; }
.etabs { flex: none; display: grid; grid-template-columns: 58px 50px 79px 127px 95px 52px 87px 98px 50px 50px 50px 52px 49px; height: 20px; padding: 1px 0; }
.etabs button { display: flex; align-items: center; justify-content: space-between; color: #404040; border-right: 2px solid #696969; box-shadow: inset 1px 1px 0 #fff; padding: 0 0 0 2px; white-space: nowrap; }
.etabs .icon { width: 10px; height: 10px; color: #a8a8a8; }
.etabs .live { padding: 0 2px 0 4px; }
.etabs .live .icon { color: #f5484e; }
.etabs .sel { background: #fff; color: #000; }
.frame { flex: 1; min-height: 0; display: flex; border: solid #696969; border-width: 1px 2px 2px 1px; border-top-color: #a0a0a0; border-left-color: #fff; padding: 0 2px 2px 1px; }
.gridwrap { flex: 1; min-width: 0; display: flex; flex-direction: column; background: #fff; }
.grid { width: 100%; }
.w20 { width: 20px; } .w50 { width: 50px; } .w80 { width: 80px; } .w115 { width: 115px; } .w200 { width: 200px; }
.grid th { height: 20px; border-top-width: 0; padding-top: 2px; }
.grid td { height: 22px; padding: 2px 0 0 3px; }
.grid td.ic { padding: 0; }
.grid .alt { background: #e0e0e0; }
.grid .cur { background: #0078d7; color: #fff; }
.dot { display: block; width: 17px; height: 17px; margin-left: 2px; border-radius: 50%; background: #b0a800; }
.im { width: 14px; height: 14px; margin: auto; color: #e9ebec; }
.alt .im { color: #e4e5e7; }
.pl { width: 17px; height: 17px; margin: auto; color: #d6d7d8; }
.cur .im { color: #bdd7ee; }
.cur .pl { color: #cfe0ee; }
.pn { width: 17px; height: 17px; margin: auto; color: #f7941d; }
.rest { flex: 1; background: #ababab; }
.events .scroll { margin-left: 1px; width: 15px; }

.btabs { flex: none; display: grid; grid-template-columns: 84px 40px 47px; align-items: start; height: 22px; padding-top: 3px; background: #f0f0f0; }
.btabs button { height: 18px; border: 1px solid #d9d9d9; border-left: 0; }
.btabs .sel { height: 19px; background: #fff; border-color: #fff; padding-top: 1px; }

.status { flex: none; display: flex; align-items: center; gap: 7px; height: 20px; padding-left: 4px; font: 11px/16px var(--ui); white-space: nowrap; }
.status > span { margin-top: 3px; }
.server { margin-left: auto; display: flex; align-items: center; gap: 4px; }
.server i { width: 13px; height: 13px; border-radius: 50%; background: #0be30b; }
.server span { padding-top: 2px; }
.shield { width: 17px; height: 17px; color: #f7941d; }
.grip { width: 11px; height: 11px; color: #b0b0b0; align-self: end; }
</style>
